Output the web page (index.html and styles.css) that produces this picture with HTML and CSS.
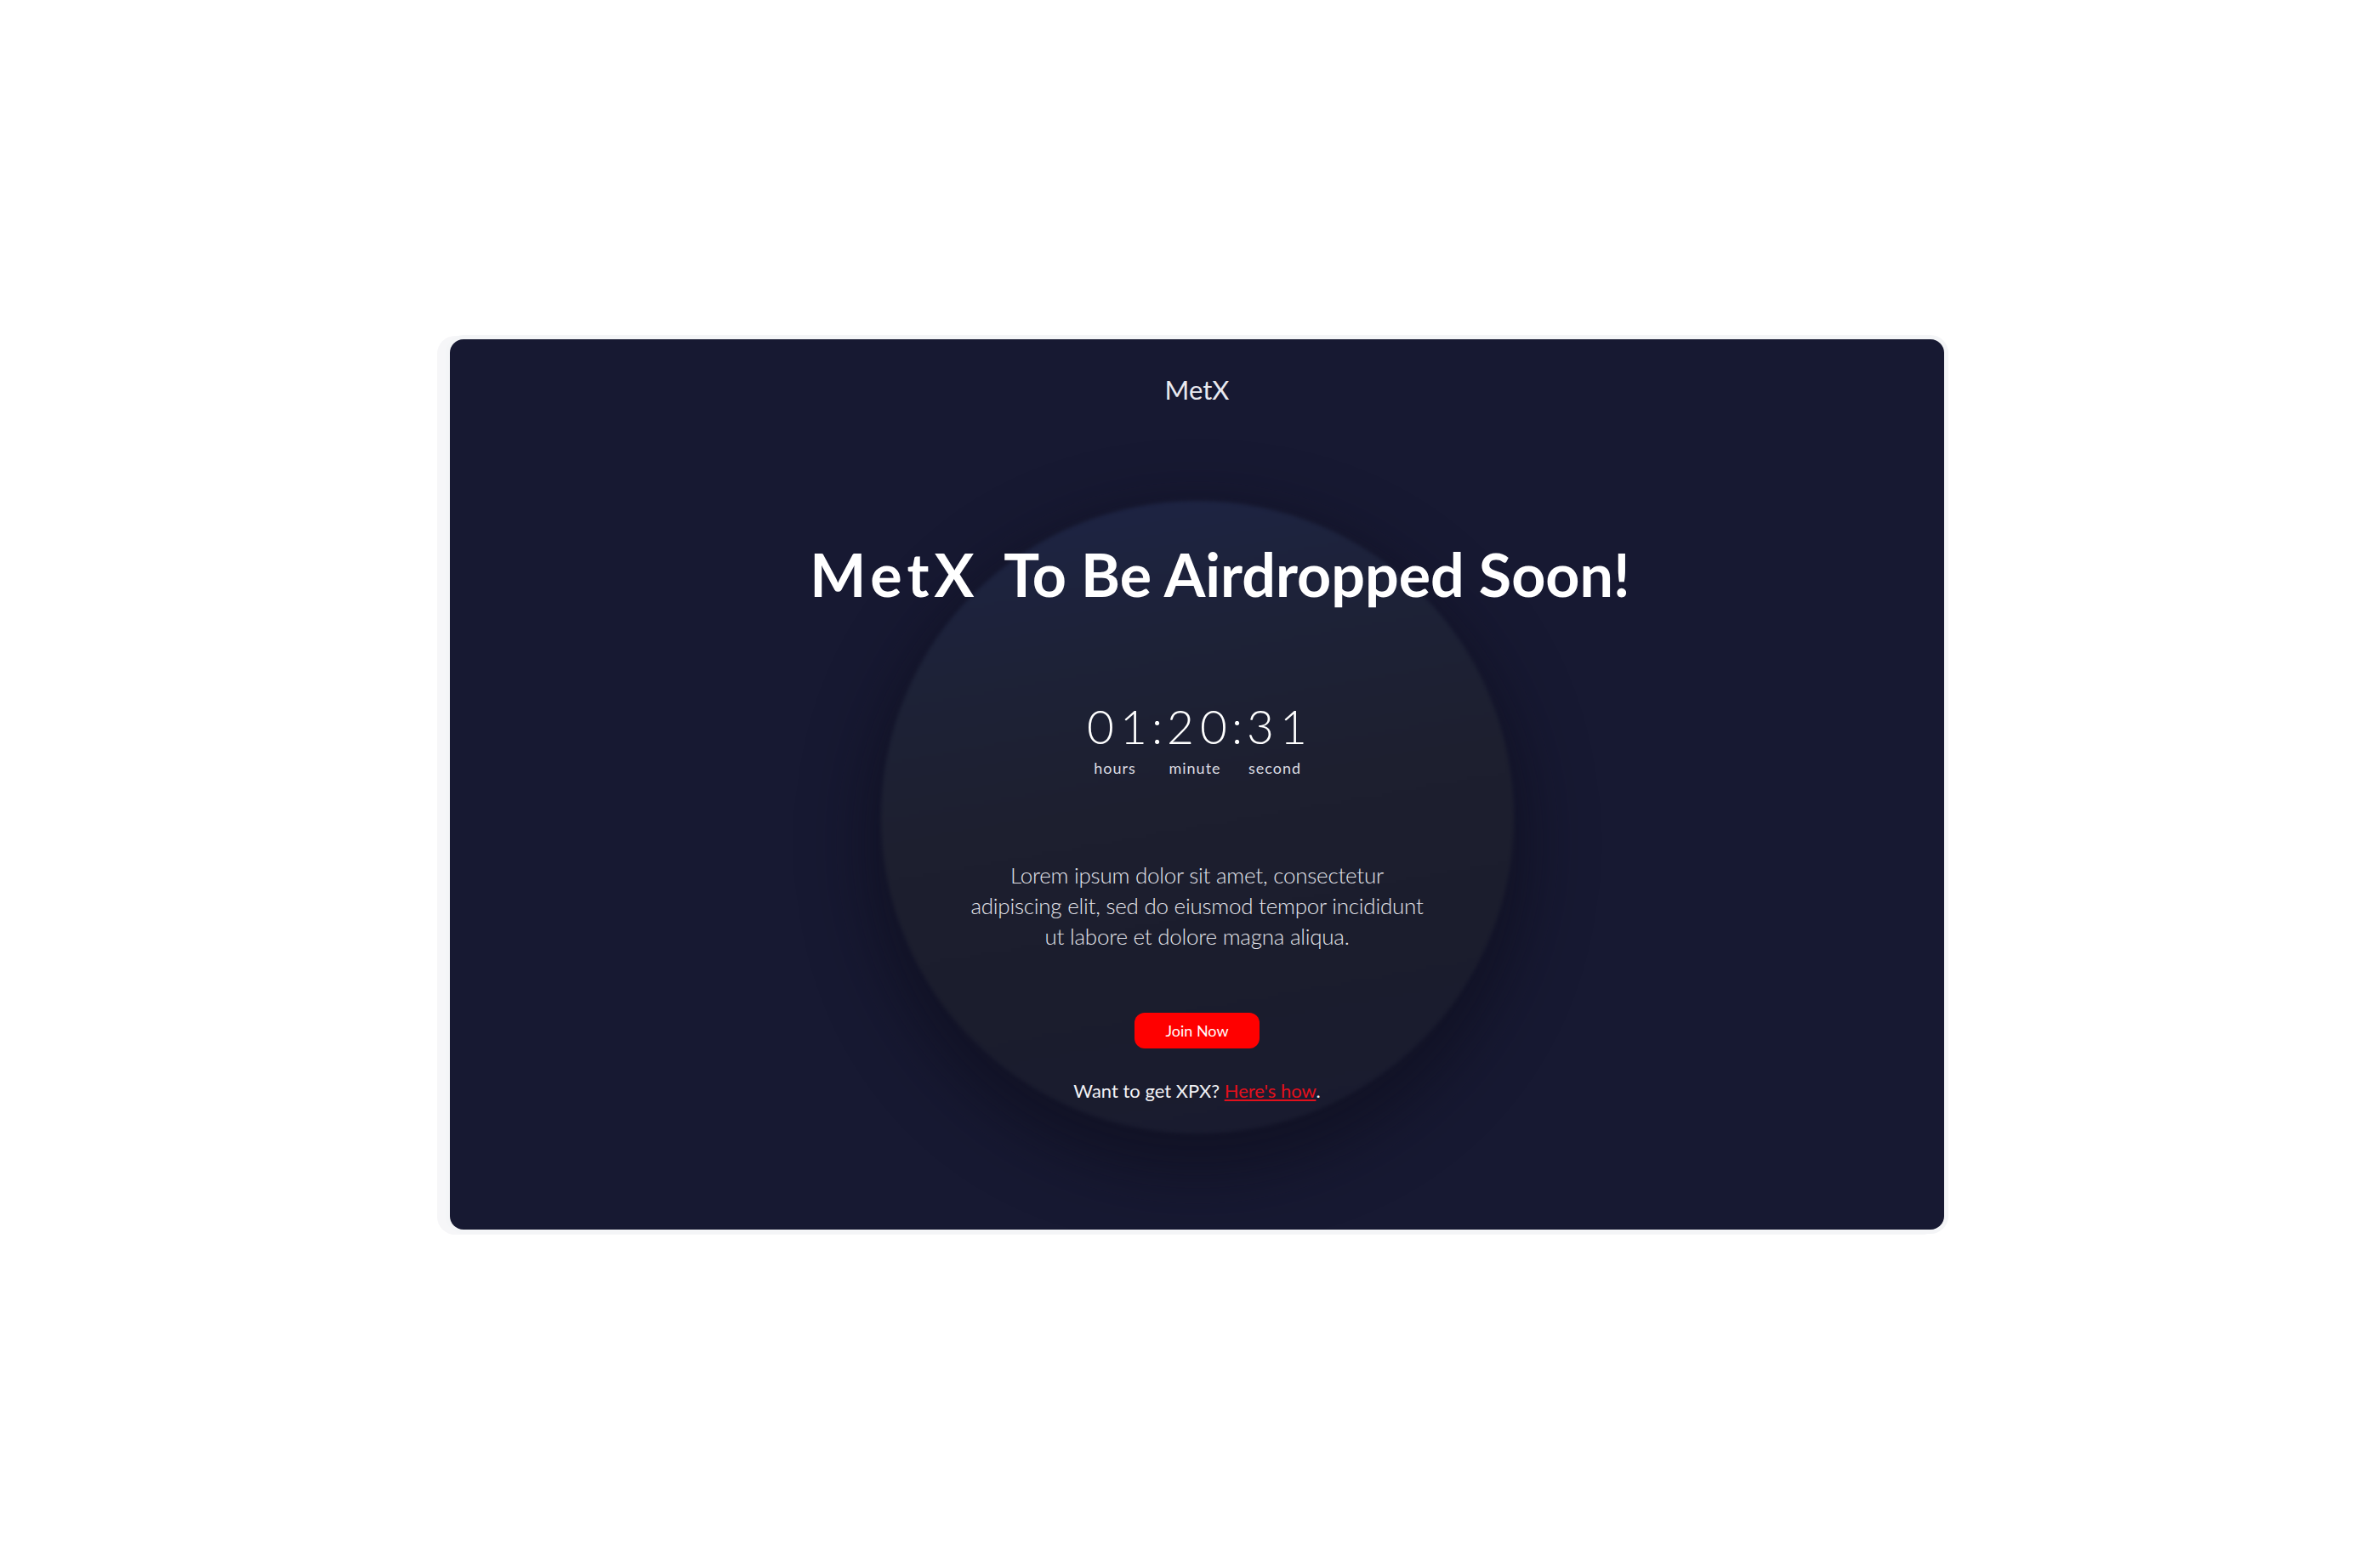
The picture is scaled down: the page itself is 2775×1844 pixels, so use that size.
FILE: index.html
```html
<!DOCTYPE html>
<html lang="en">
<head>
<meta charset="utf-8">
<title>MetX Airdrop</title>
<link rel="stylesheet" href="styles.css">
</head>
<body>
<div class="page">
  <main class="card">
    <div class="logo">MetX</div>
    <h1 class="title"><span class="brand">MetX</span> To Be Airdropped Soon!</h1>
    <div class="countdown">
      <div class="unit"><span class="num">01</span><span class="label">hours</span></div>
      <span class="colon">:</span>
      <div class="unit"><span class="num">20</span><span class="label">minute</span></div>
      <span class="colon">:</span>
      <div class="unit"><span class="num">31</span><span class="label">second</span></div>
    </div>
    <p class="desc">Lorem ipsum dolor sit amet, consectetur<br>adipiscing elit, sed do eiusmod tempor incididunt<br>ut labore et dolore magna aliqua.</p>
    <a class="btn" href="#">Join Now</a>
    <p class="foot">Want to get XPX? <a class="link" href="#">Here's how</a>.</p>
  </main>
</div>
</body>
</html>
```
FILE: styles.css
```css
html, body {
  margin: 0;
  padding: 0;
  background: #ffffff;
}
body {
  font-family: Lato, "Open Sans", sans-serif;
}
.page {
  width: 2775px;
  height: 1844px;
  box-sizing: border-box;
  padding: 399px 0 0 529px;
}
.card {
  position: relative;
  overflow: hidden;
  width: 1757px;
  height: 1047px;
  box-sizing: border-box;
  padding-top: 39px;
  border-radius: 16px;
  background: #171932;
  box-shadow: 0 0 0 5px #f4f5f7, -10px 1px 0 5px #f6f6f8;
  display: flex;
  flex-direction: column;
  align-items: center;
  color: #ffffff;
}
.card::before {
  content: "";
  position: absolute;
  left: 507px;
  top: 190px;
  width: 744px;
  height: 744px;
  border-radius: 50%;
  background: linear-gradient(170deg, #1d2446 0%, #1d2237 26%, #1d1f2f 48%, #1b1d2d 72%, #191b30 100%);
  box-shadow: 0 30px 70px 20px rgba(11, 12, 26, 0.5);
  filter: blur(2px);
  z-index: 0;
}
.card > * {
  position: relative;
  z-index: 1;
}
.logo {
  font-size: 31px;
  line-height: 40px;
  font-weight: 400;
  color: #e9e9ef;
}
.title {
  margin: 155px 0 0 0;
  padding-left: 54px;
  font-size: 70px;
  line-height: 84px;
  font-weight: 700;
  color: #ffffff;
  white-space: nowrap;
}
.brand {
  letter-spacing: 6px;
  margin-right: 14px;
}
.countdown {
  margin-top: 107px;
  display: flex;
  align-items: flex-start;
  gap: 5px;
}
.unit {
  display: flex;
  flex-direction: column;
  align-items: center;
}
.num, .colon {
  font-size: 55px;
  line-height: 60px;
  font-weight: 300;
  color: #ffffff;
}
.num {
  letter-spacing: 7px;
  margin-right: -7px;
}
.label {
  margin-top: 8px;
  margin-right: 5px;
  font-size: 18px;
  line-height: 22px;
  letter-spacing: 1px;
  color: #dcdde3;
}
.desc {
  margin: 97px 0 0 0;
  font-size: 26px;
  line-height: 36px;
  font-weight: 300;
  letter-spacing: -0.25px;
  text-align: center;
  color: #e3e4ea;
}
.btn {
  margin-top: 72px;
  width: 147px;
  height: 42px;
  border-radius: 12px;
  background: #ff0000;
  color: #ffffff;
  font-size: 18px;
  line-height: 42px;
  text-align: center;
  text-decoration: none;
}
.foot {
  margin: 35px 0 0 0;
  font-size: 22px;
  line-height: 30px;
  color: #f2f2f5;
}
.link {
  color: #e3101c;
  text-decoration: underline;
}
```
